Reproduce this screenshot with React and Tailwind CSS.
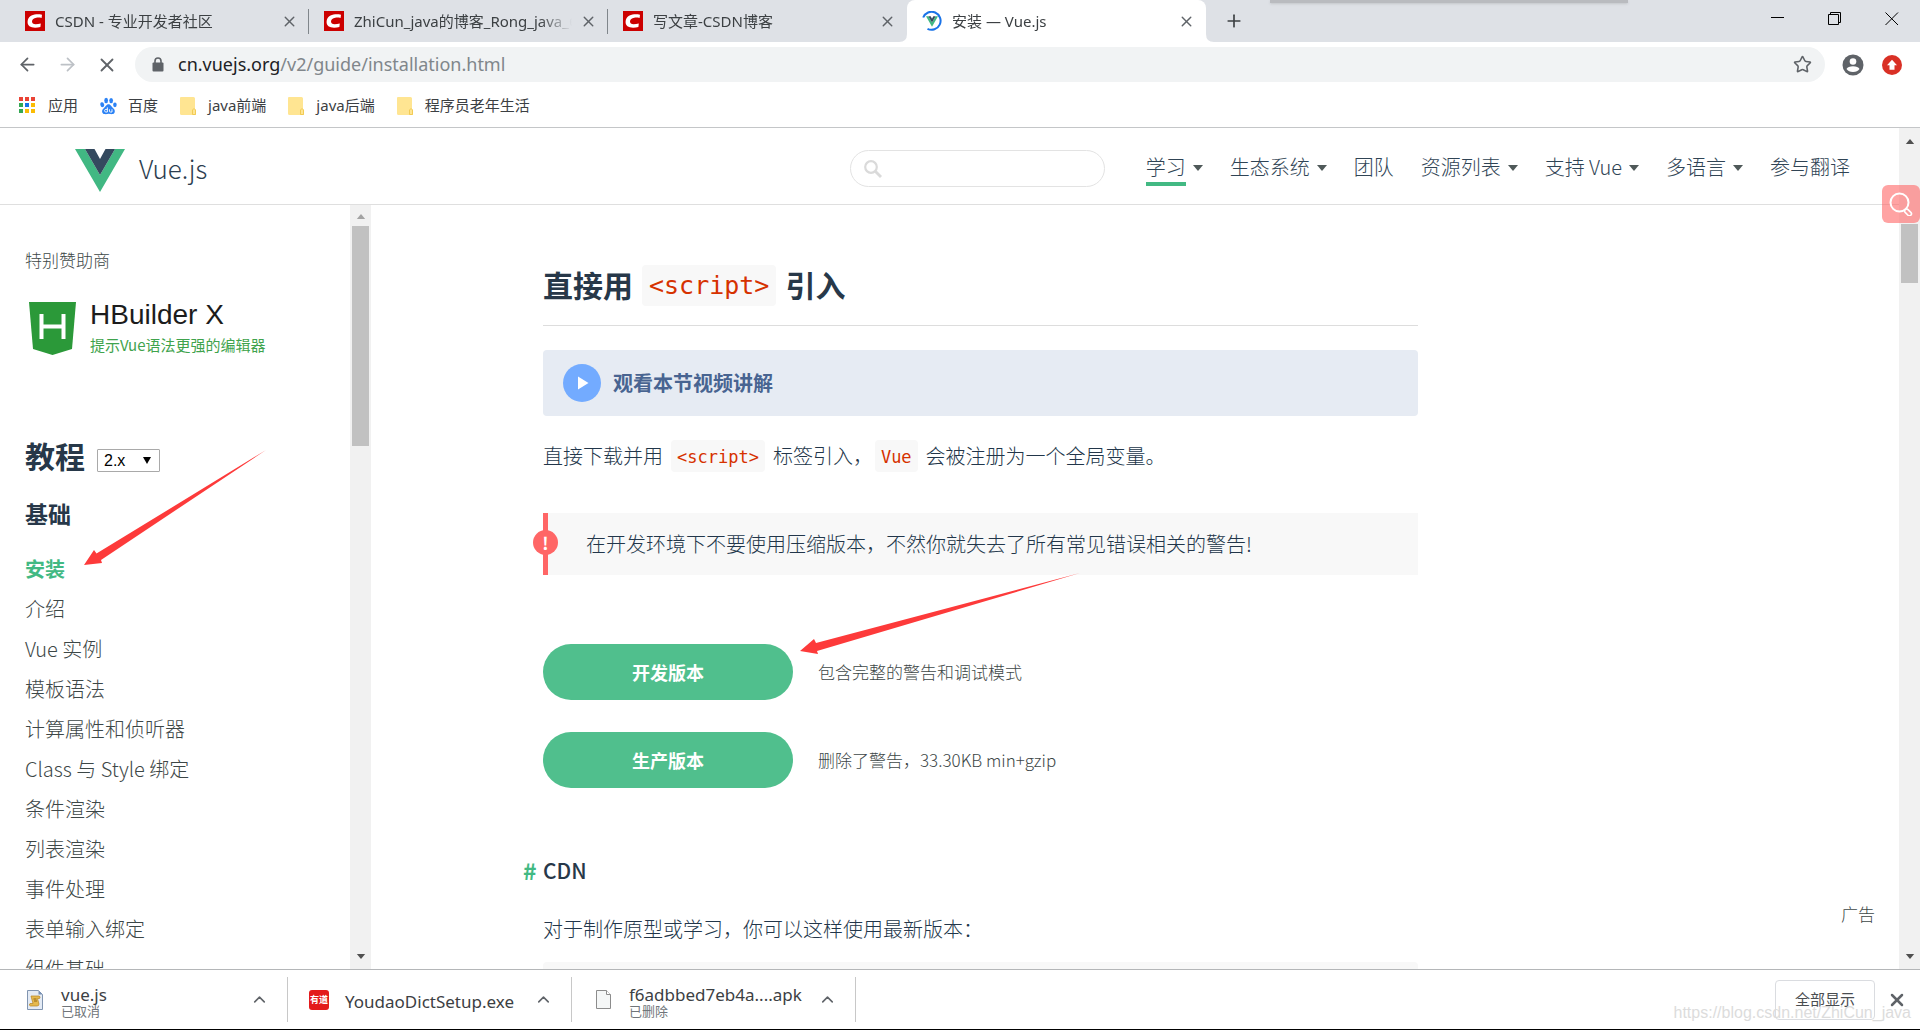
import { useState } from 'react';
import { ArrowLeft, ArrowRight, X, Plus, Star, ChevronUp } from 'lucide-react';

const TABS = [
  { title: 'CSDN - 专业开发者社区', icon: 'csdn' },
  { title: 'ZhiCun_java的博客_Rong_java_CSDN', icon: 'csdn' },
  { title: '写文章-CSDN博客', icon: 'csdn' },
  { title: '安装 — Vue.js', icon: 'vue', active: true },
];

const BOOKMARKS = ['java前端', 'java后端', '程序员老年生活'];

const NAV = [
  { label: '学习', menu: true, current: true },
  { label: '生态系统', menu: true },
  { label: '团队' },
  { label: '资源列表', menu: true },
  { label: '支持 Vue', menu: true },
  { label: '多语言', menu: true },
  { label: '参与翻译' },
];

const GUIDE = [
  '安装',
  '介绍',
  'Vue 实例',
  '模板语法',
  '计算属性和侦听器',
  'Class 与 Style 绑定',
  '条件渲染',
  '列表渲染',
  '事件处理',
  '表单输入绑定',
  '组件基础',
];

function CsdnIcon() {
  return (
    <svg viewBox="0 0 20 20" className="w-5 h-5 shrink-0">
      <rect width="20" height="20" fill="#cc0000" />
      <path d="M17 3.800 L16.600 7 C14.600 6.500 13 6.500 11.300 6.700 C8.700 7.100 7.200 8.500 7 10.300 C6.900 12.300 8.300 13.200 10.600 13.200 C12.300 13.200 14 13 15.800 12.600 L15.400 16 C13.700 16.500 12 16.700 10.100 16.700 C5.400 16.700 2.300 14.700 2.600 10.500 C2.900 6.200 6.600 3.600 11.200 3.300 C13.400 3.200 15.300 3.300 17 3.800 Z" fill="#fff" />
    </svg>
  );
}

function VueMark({ className }) {
  return (
    <svg viewBox="0 0 50 43" className={className}>
      <path d="M0 0 H10 L25 26 L40 0 H50 L25 43 Z" fill="#41b883" />
      <path d="M10 0 H19.500 L25 10 L30.500 0 H40 L25 26 Z" fill="#34495e" />
    </svg>
  );
}

// Vue favicon inside the page-loading ring
function LoadingIcon() {
  return (
    <span className="relative flex w-5 h-5 shrink-0 items-center justify-center">
      <svg viewBox="0 0 20 20" className="absolute inset-0">
        <path d="M1.200 6.500 A9 9 0 1 1 5.500 17.800" fill="none" stroke="#1a73e8" strokeWidth="2" />
      </svg>
      <VueMark className="relative w-3 h-[11px]" />
    </span>
  );
}

function Folder() {
  return (
    <svg viewBox="0 0 16 18" className="w-4 h-[18px]">
      <path d="M1 0 H13.500 Q15 0 15 1.500 V12 L16 13 V18 H1.500 Q0 18 0 16.500 V1 Q0 0 1 0 Z" fill="#ffe592" />
      <path d="M12.500 17.500 V13 L14 11.500 L15.500 13 V17.500 Z" fill="#ffe592" stroke="#f2cb55" strokeWidth="1" />
    </svg>
  );
}

function Apps() {
  const colors = ['#ea4335', '#ea4335', '#ea4335', '#34a853', '#1a73e8', '#fbbc04', '#34a853', '#fbbc04', '#fbbc04'];
  return (
    <svg viewBox="0 0 17 17" className="w-[17px] h-[17px]">
      {colors.map((c, i) => (
        <rect key={i} x={(i % 3) * 6} y={Math.floor(i / 3) * 6} width="4" height="4" fill={c} />
      ))}
    </svg>
  );
}

function Paw() {
  return (
    <svg viewBox="0 0 18 18" className="w-[17px] h-[18px]" fill="#2b82f5">
      <ellipse cx="6.500" cy="3.200" rx="2" ry="2.900" />
      <ellipse cx="11.800" cy="3.300" rx="2" ry="2.900" />
      <ellipse cx="2.400" cy="7.600" rx="2" ry="2.600" transform="rotate(-15 2.400 7.600)" />
      <ellipse cx="15.800" cy="7.800" rx="1.900" ry="2.500" />
      <path d="M9 7.200 C11.500 7.200 12 10 14 11.300 C16.500 13 16.300 17.500 12.800 17.600 C11 17.700 10 17.300 9 17.300 C8 17.300 6.500 17.800 5 17.600 C1.500 17.200 1.500 13 4 11.300 C6 10 6.500 7.200 9 7.200 Z" />
      <path d="M7.800 10.500 V15.400 H6.200 Q4.800 15.200 4.800 14 Q4.900 12.700 6.200 12.600 H7.800 M10 12.500 V14.500 Q10.100 15.400 11 15.400 H12.700 V12.500" fill="none" stroke="#fff" strokeWidth="1" />
    </svg>
  );
}

function Caret({ className }) {
  return (
    <svg viewBox="0 0 10 6" className={className}>
      <path d="M0 0 H10 L5 6 Z" fill="currentColor" />
    </svg>
  );
}

function TabStrip() {
  return (
    <div className="relative flex h-[42px] shrink-0 bg-[#dee1e6] pl-[10px] text-[15px] text-[#3c4043]">
      <div className="absolute left-[1270px] top-0 h-[3px] w-[358px] bg-[#b9bbbf] shadow-sm" />
      {TABS.map((tab, i) => (
        <div
          key={tab.title}
          className={`relative flex min-w-0 basis-[299px] items-center pl-[15px] pr-[11px] ${tab.active ? 'rounded-t-lg bg-white' : ''}`}
        >
          {tab.active && (
            <>
              <svg viewBox="0 0 8 8" className="absolute -left-2 bottom-0 w-2 h-2"><path d="M8 0 V8 H0 Q8 8 8 0 Z" fill="#fff" /></svg>
              <svg viewBox="0 0 8 8" className="absolute -right-2 bottom-0 w-2 h-2"><path d="M0 0 V8 H8 Q0 8 0 0 Z" fill="#fff" /></svg>
            </>
          )}
          {tab.icon === 'csdn' ? <CsdnIcon /> : <LoadingIcon />}
          <span className="ml-[10px] min-w-0 flex-1 overflow-hidden whitespace-nowrap [mask-image:linear-gradient(to_right,black_85%,transparent)]">
            {tab.title}
          </span>
          <button aria-label="关闭标签页" className="ml-2 text-[#5f6368]">
            <X size={17} strokeWidth={2} />
          </button>
          {i < 2 && <span className="-mr-[11px] ml-[10px] h-[25px] w-px bg-[#80868b]" />}
        </div>
      ))}
      <button aria-label="新标签页" className="ml-[18px] text-[#3c4043]">
        <Plus size={20} strokeWidth={2} />
      </button>
      <div className="ml-auto flex items-start gap-[43px] pr-[21px] pt-3 text-black">
        <button aria-label="最小化">
          <svg viewBox="0 0 14 14" className="w-[14px] h-[14px]"><path d="M0 5.500 H13" stroke="currentColor" /></svg>
        </button>
        <button aria-label="还原">
          <svg viewBox="0 0 14 14" className="w-[14px] h-[14px]" fill="none" stroke="currentColor"><path d="M.5 2.500 H10.500 V12.500 H.5 Z M2.500 2.500 V.5 H12.500 V10.500 H10.500" /></svg>
        </button>
        <button aria-label="关闭">
          <svg viewBox="0 0 14 14" className="w-[14px] h-[14px]"><path d="M.5 .5 L13 13 M13 .5 L.5 13" stroke="currentColor" /></svg>
        </button>
      </div>
    </div>
  );
}

function Toolbar() {
  return (
    <div className="flex h-[45px] shrink-0 items-center pl-[17px] pr-[18px] text-[#5f6368]">
      <button aria-label="后退"><ArrowLeft size={21} /></button>
      <button aria-label="前进" className="ml-[19px] text-[#bdc1c6]"><ArrowRight size={21} /></button>
      <button aria-label="停止" className="ml-[18px]"><X size={22} /></button>
      <div className="ml-[17px] flex h-[35px] flex-1 items-center rounded-full bg-[#f1f3f4] pl-[17px] pr-[13px]">
        <svg viewBox="0 0 12 15" className="w-3 h-[15px]">
          <path d="M3 6 V4 A3 3 0 0 1 9 4 V6" fill="none" stroke="#5f6368" strokeWidth="1.600" />
          <rect x="0.500" y="5.500" width="11" height="9" rx="1" fill="#5f6368" />
        </svg>
        <span className="ml-[14px] flex-1 text-[18px] text-[#80868b]">
          <span className="text-[#202124]">cn.vuejs.org</span>/v2/guide/installation.html
        </span>
        <button aria-label="收藏"><Star size={19} strokeWidth={2} /></button>
      </div>
      <button aria-label="用户" className="ml-[17px]">
        <svg viewBox="0 0 22 22" className="w-[22px] h-[22px]">
          <circle cx="11" cy="11" r="10.500" fill="#5f6368" />
          <circle cx="11" cy="7.500" r="3.300" fill="#fff" />
          <path d="M4.500 15 Q6 12.300 11 12.300 Q16 12.300 17.500 15 Q15.500 18 11 18 Q6.500 18 4.500 15 Z" fill="#fff" />
        </svg>
      </button>
      <button aria-label="更新" className="ml-[18px]">
        <svg viewBox="0 0 20 20" className="w-5 h-5">
          <circle cx="10" cy="10" r="10" fill="#d93025" />
          <path d="M10 4.800 L15 10.300 H12.500 V14.800 H7.500 V10.300 H5 Z" fill="#fff" />
        </svg>
      </button>
    </div>
  );
}

function Bookmarks() {
  return (
    <div className="flex h-[41px] shrink-0 items-center gap-[22px] border-b border-[#c4c6c8] pb-[3px] pl-[19px] text-[15px] text-[#3c4043]">
      <a href="#apps" className="flex items-center gap-3"><Apps />应用</a>
      <a href="#baidu" className="flex items-center gap-[11px]"><Paw />百度</a>
      {BOOKMARKS.map(name => (
        <a key={name} href={`#${name}`} className="flex items-center gap-3"><Folder />{name}</a>
      ))}
    </div>
  );
}

function SiteHeader() {
  return (
    <header className="flex h-[77px] shrink-0 items-center border-b border-[#dfdfdf] pl-[75px] pr-[49px]">
      <a href="#home" className="mt-2 flex items-start gap-[14px] text-[26px] font-light leading-[38px] text-[#2c3e50]">
        <VueMark className="w-[50px] h-[43px]" />
        Vue.js
      </a>
      <div className="relative ml-auto mr-[41px] mt-1">
        <svg viewBox="0 0 18 18" className="absolute left-[14px] top-[10px] w-[18px] h-[18px]" fill="none" stroke="#dadada">
          <circle cx="7" cy="7" r="5.800" strokeWidth="2.200" />
          <path d="M11.500 11.500 L17 17" strokeWidth="2.800" />
        </svg>
        <input type="text" aria-label="搜索" className="block h-[37px] w-[255px] rounded-full border border-[#e3e3e3] pl-10 pr-4 text-base outline-none" />
      </div>
      <nav className="flex gap-[27px] text-[20px] font-light leading-[30px] text-[#304455]">
        {NAV.map(item => (
          <a key={item.label} href={`#${item.label}`} className="flex items-center gap-[7px] whitespace-nowrap">
            <span className={`border-b-4 pt-[5px] ${item.current ? 'border-[#42b983]' : 'border-transparent'}`}>{item.label}</span>
            {item.menu && <Caret className="mt-[3px] w-[10px] h-[6px] text-[#4f5959]" />}
          </a>
        ))}
      </nav>
    </header>
  );
}

function Sidebar() {
  const [version, setVersion] = useState('2.x');
  return (
    <aside className="flex w-[371px] shrink-0">
      <div className="flex-1 overflow-hidden pl-[25px] pt-[43px] text-[#3d4747]">
        <p className="text-[17px] font-light leading-6">特别赞助商</p>
        <a href="#hbuilder" className="mt-[29px] flex gap-[14px] pl-1">
          <svg viewBox="0 0 47 53" className="w-[47px] h-[53px] mt-px">
            <path d="M0 0 H47 L43 47 L23.500 53 L4 47 Z" fill="#2b9939" />
            <path d="M12.500 12 V37 M34.500 12 V37 M12.500 24.500 H34.500" stroke="#fff" strokeWidth="4" fill="none" />
          </svg>
          <span className="flex flex-col gap-1 whitespace-nowrap">
            <span className="font-['Liberation_Sans',sans-serif] text-[28px] leading-7 text-[#1c1c1c]">HBuilder X</span>
            <span className="text-[15px] leading-6 text-[#3fa34d]">提示Vue语法更强的编辑器</span>
          </span>
        </a>
        <div className="mt-[78px] flex items-center gap-3">
          <h2 className="text-[30px] font-bold leading-10 text-[#273849]">教程</h2>
          <div className="relative mt-[11px]">
            <select
              aria-label="版本"
              value={version}
              onChange={e => setVersion(e.target.value)}
              className="block h-[23px] w-[63px] appearance-none rounded-[1px] border border-[#a9a9a9] bg-white pl-[6px] font-['Liberation_Sans',sans-serif] text-base leading-5 text-black"
            >
              <option>2.x</option>
              <option>1.0</option>
            </select>
            <svg viewBox="0 0 8 7" className="pointer-events-none absolute right-[9px] top-[8px] w-2 h-[7px]"><path d="M0 0 H8 L4 7 Z" /></svg>
          </div>
        </div>
        <h3 className="mt-[23px] text-[23px] font-bold leading-[30px] text-[#273849]">基础</h3>
        <ul className="mt-[21px] text-[20px] font-light leading-10">
          {GUIDE.map((name, i) => (
            <li key={name}>
              <a href={`#${name}`} className={i === 0 ? 'font-bold text-[#42b983]' : ''}>{name}</a>
            </li>
          ))}
        </ul>
      </div>
      <div className="flex w-[21px] flex-col items-center bg-[#f1f1f1] pb-[10px] pt-[9px]">
        <Caret className="w-[10px] h-[5px] rotate-180 text-[#a3a3a3]" />
        <div className="mt-[7px] h-[220px] w-[17px] bg-[#c1c1c1]" />
        <Caret className="mt-auto w-[10px] h-[5px] text-[#505050]" />
      </div>
    </aside>
  );
}

function Code({ children }) {
  return (
    <code className="rounded-sm bg-[#f8f8f8] px-[6px] pb-[5px] pt-[7px] font-['DejaVu_Sans_Mono',monospace] text-[17px] font-normal leading-5 text-[#d63200]">
      {children}
    </code>
  );
}

function Download({ href, label, note }) {
  return (
    <div className="flex items-center gap-[25px]">
      <a href={href} className="flex h-14 w-[250px] items-center justify-center rounded-full bg-[#50bf8d] text-[18px] font-bold text-white">{label}</a>
      <small className="text-[17px] font-light text-[#3d4747]">{note}</small>
    </div>
  );
}

function Guide() {
  return (
    <main className="relative flex-1 overflow-hidden text-[20px] font-light leading-8 text-[#22364a]">
      <article className="ml-[172px] w-full max-w-[875px]">
        <h2 className="mt-[60px] flex items-center gap-[9px] border-b border-[#ddd] pb-[19px] text-[30px] font-bold leading-[41px] text-[#273849]">
          <span className="-mt-[3px]">直接用</span>
          <code className="rounded-sm bg-[#f8f8f8] px-[7px] font-['DejaVu_Sans_Mono',monospace] text-[25px] font-normal text-[#d63200]">&lt;script&gt;</code>
          <span className="-mt-[3px]">引入</span>
        </h2>
        <a href="#video" className="mt-6 flex h-[66px] items-center gap-3 rounded-sm bg-[#e6ebf3] pl-5 font-bold text-[#486491]">
          <svg viewBox="0 0 38 38" className="w-[38px] h-[38px]">
            <circle cx="19" cy="19" r="19" fill="#73abff" />
            <path d="M15 12.500 L25.500 19 L15 25.500 Z" fill="#fff" />
          </svg>
          观看本节视频讲解
        </a>
        <p className="mt-6 flex items-center gap-2 whitespace-nowrap">
          直接下载并用
          <Code>&lt;script&gt;</Code>
          <span className="flex items-center gap-[2px]">标签引入，<Code>Vue</Code></span>
          会被注册为一个全局变量。
        </p>
        <p className="relative mt-[41px] flex h-[62px] items-center border-l-[5px] border-[#f66] bg-[#f8f8f8] pl-[38px]">
          <span className="absolute -left-[15px] top-[17px] flex h-[25px] w-[25px] items-center justify-center rounded-full bg-[#f66] text-[17px] font-bold text-white">!</span>
          在开发环境下不要使用压缩版本，不然你就失去了所有常见错误相关的警告!
        </p>
        <div className="mt-[69px] flex flex-col gap-8">
          <Download href="#dev" label="开发版本" note="包含完整的警告和调试模式" />
          <Download href="#prod" label="生产版本" note="删除了警告，33.30KB min+gzip" />
        </div>
        <h3 className="relative mt-[66px] text-[21px] font-medium text-[#273849]">
          <a href="#CDN" className="absolute -left-5 text-[23px] font-bold text-[#42b983]">#</a>
          CDN
        </h3>
        <p className="mt-[27px]">对于制作原型或学习，你可以这样使用最新版本：</p>
        <div className="mt-[17px] h-20 rounded-sm bg-[#f8f8f8]" />
      </article>
      <p className="absolute bottom-[39px] right-[24px] text-[17px] text-[#3d4747]">广告</p>
    </main>
  );
}

function DownloadItem({ icon, name, state, width }) {
  return (
    <div className={`flex h-[45px] items-center border-r border-[#c8c8c8] ${width}`}>
      {icon}
      <div className="min-w-0 flex-1 whitespace-nowrap pt-1 text-[17px] leading-[18px] text-[#3c4043]">
        {name}
        {state && <div className="text-[13px] leading-[14px] text-[#70757a]">{state}</div>}
      </div>
      <button aria-label="更多操作" className="text-[#5f6368]"><ChevronUp size={19} /></button>
    </div>
  );
}

function DownloadShelf() {
  return (
    <footer className="relative flex h-[61px] shrink-0 items-center border-b border-t border-b-black border-t-[#b4b6b8] pr-[13px]">
      <DownloadItem
        width="w-[288px] pl-[27px] pr-[18px]"
        name="vue.js"
        state="已取消"
        icon={
          <svg viewBox="0 0 16 20" className="mr-[18px] w-4 h-5">
            <path d="M.5 .5 H11.500 L15.500 4.500 V19.500 H.5 Z" fill="#e4ebf5" stroke="#8195b0" />
            <path d="M11.500 .5 V4.500 H15.500" fill="#7891b5" />
            <path d="M4 6 H12 Q14 6.500 12.500 8.500 H10.500 L12 14 Q12 16 10 16 H3.500 Q1.500 15.500 3 13.500 H6 L4.500 8 Z" fill="#e5b94e" stroke="#b78524" strokeWidth=".7" />
            <path d="M6.500 9 H9.500 M7 11 H10" stroke="#8f6416" />
          </svg>
        }
      />
      <DownloadItem
        width="w-[284px] pl-[21px] pr-[18px]"
        name="YoudaoDictSetup.exe"
        icon={<span className="mr-4 flex h-5 w-5 items-center justify-center overflow-hidden whitespace-nowrap rounded-[3px] bg-[#e31b1b] text-[9px] font-bold text-white">有道</span>}
      />
      <DownloadItem
        width="w-[284px] pl-6 pr-[18px]"
        name="f6adbbed7eb4a....apk"
        state="已删除"
        icon={
          <svg viewBox="0 0 15 19" className="mr-[18px] w-[15px] h-[19px]">
            <path d="M.5 .5 H10.500 L14.500 4.500 V18.500 H.5 Z" fill="#f5f7f7" stroke="#8c8c8c" />
            <path d="M10.500 .5 V4.500 H14.500" fill="#fff" stroke="#8c8c8c" />
          </svg>
        }
      />
      <button className="ml-auto h-10 w-[100px] rounded border border-[#dadce0] text-[15px] text-[#4a4d51]">全部显示</button>
      <button aria-label="关闭下载栏" className="ml-3 text-[#5f6368]"><X size={20} strokeWidth={3} /></button>
      <span className="absolute bottom-1 right-[9px] font-['Liberation_Sans',sans-serif] text-[16px] text-[#dcdcdc]">
        https://blog.csdn.net/ZhiCun_java
      </span>
    </footer>
  );
}

export default function App() {
  return (
    <div className="relative flex h-screen flex-col overflow-hidden bg-white font-['Noto_Sans','Noto_Sans_CJK_SC',sans-serif]">
      <TabStrip />
      <Toolbar />
      <Bookmarks />
      <div className="flex min-h-0 flex-1">
        <div className="flex min-w-0 flex-1 flex-col font-['Noto_Sans_CJK_SC',sans-serif]">
          <SiteHeader />
          <div className="flex min-h-0 flex-1">
            <Sidebar />
            <Guide />
          </div>
        </div>
        <div className="relative flex w-[21px] shrink-0 flex-col items-center bg-[#f1f1f1] pb-[10px] pt-[11px]">
          <Caret className="w-[10px] h-[5px] rotate-180 text-[#505050]" />
          <div className="mt-20 h-[59px] w-[17px] bg-[#c1c1c1]" />
          <Caret className="mt-auto w-[10px] h-[5px] text-[#505050]" />
          <button aria-label="搜索" className="absolute right-0 top-[57px] flex h-[38px] w-[38px] items-center justify-center rounded-md bg-[#f66]/60">
            <svg viewBox="0 0 24 24" className="w-6 h-6" fill="none" stroke="#fff">
              <circle cx="10.500" cy="10.500" r="9" strokeWidth="2" />
              <rect x="16" y="18" width="8" height="4" rx="2" strokeWidth="1.600" transform="rotate(45 19 19)" />
            </svg>
          </button>
        </div>
      </div>
      <DownloadShelf />

      {/* Annotation arrows drawn over the page */}
      <svg viewBox="0 0 182 115" className="pointer-events-none absolute left-[84px] top-[450px] w-[182px] h-[115px]" fill="#fd3a3a">
        <path d="M0 115 L10 100 L12.500 103.500 L182 0 L17 110 L18 113 Z" />
      </svg>
      <svg viewBox="0 0 280 82" className="pointer-events-none absolute left-[800px] top-[573px] w-[280px] h-[82px]" fill="#fd3a3a">
        <path d="M0 78 L14 66 L16 70 L280 0 L17 78 L18 81 Z" />
      </svg>
    </div>
  );
}
